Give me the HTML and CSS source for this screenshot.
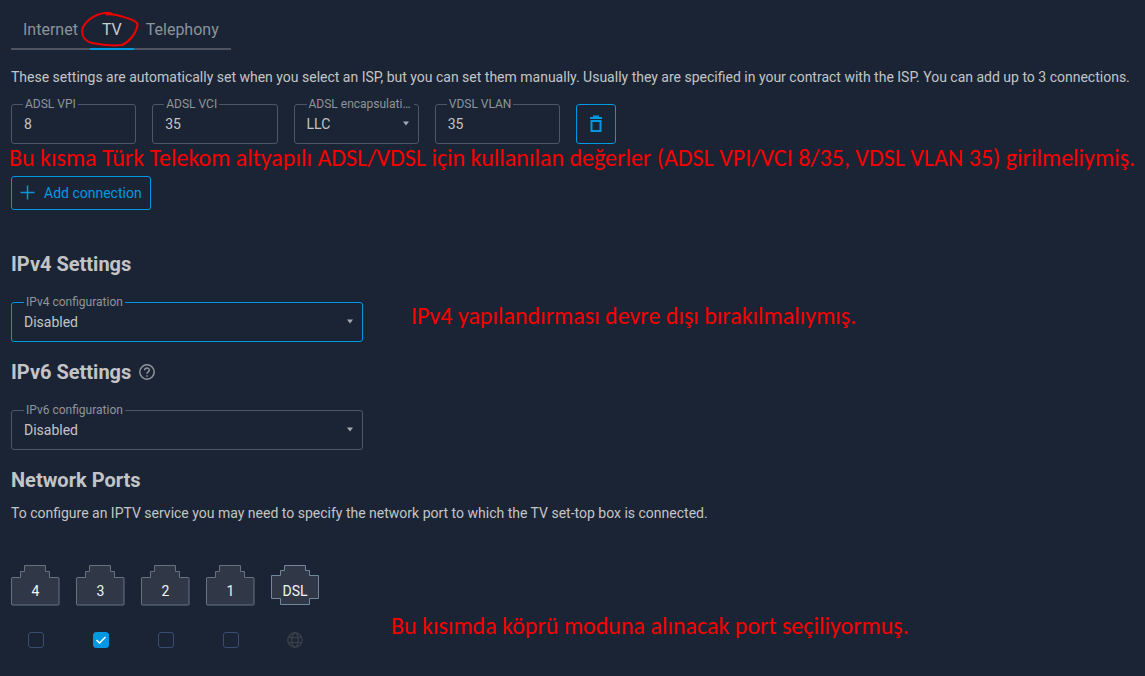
FILE: index.html
```html
<!DOCTYPE html>
<html lang="en">
<head>
<meta charset="utf-8">
<title>TV connection settings</title>
<link rel="stylesheet" href="styles.css">
</head>
<body>
<main class="page">
  <nav class="tabs">
    <a class="tab" href="#internet">Internet</a>
    <a class="tab tab-active" href="#tv" aria-current="page">TV
      <svg class="tab-mark" viewBox="0 0 60 36" aria-hidden="true"><path d="M33 3.500C31 1.500 28 1.500 25 2C15 3 5 10 2.500 18C1 25 5 30 12 32C22 34 32 35 42 34C49 31 56 23 57.500 14C58 10 49 7.500 42 5.500C37 4 31 3 26 3.500"/></svg>
    </a>
    <a class="tab" href="#telephony">Telephony</a>
  </nav>

  <p class="text">These settings are automatically set when you select an ISP, but you can set them manually. Usually they are specified in your contract with the ISP. You can add up to 3 connections.</p>

  <div class="connection">
    <div class="field"><label class="label" for="vpi">ADSL VPI</label><input class="control" id="vpi" type="text" value="8"></div>
    <div class="field"><label class="label" for="vci">ADSL VCI</label><input class="control" id="vci" type="text" value="35"></div>
    <div class="field">
      <label class="label label-select" for="encap">ADSL encapsulation</label>
      <select class="control" id="encap"><option>LLC</option></select>
      <svg class="arrow" viewBox="0 0 6 5" aria-hidden="true"><path d="M0 0.500H6L3 4.500Z"/></svg>
    </div>
    <div class="field"><label class="label" for="vlan">VDSL VLAN</label><input class="control" id="vlan" type="text" value="35"></div>
    <button class="delete" type="button" aria-label="Delete connection">
      <svg width="16" height="18" viewBox="0 0 16 18" aria-hidden="true"><path d="M2 3H14M5 1.500H11M3.500 6V16H12.500V6Z"/></svg>
    </button>
  </div>

  <p class="note note-values">Bu kısma Türk Telekom altyapılı ADSL/VDSL için kullanılan değerler (ADSL VPI/VCI 8/35, VDSL VLAN 35) girilmeliymiş.</p>

  <button class="add" type="button">
    <svg width="16" height="16" viewBox="0 0 16 16" aria-hidden="true"><path d="M7.500 0.500V14.500M0.500 7.500H14.500"/></svg>
    Add connection
  </button>

  <section class="section section-first">
    <h2 class="title">IPv4 Settings</h2>
    <div class="row">
      <div class="field field-wide field-focus">
        <label class="label label-select" for="ipv4">IPv4 configuration</label>
        <select class="control" id="ipv4"><option>Disabled</option></select>
        <svg class="arrow" viewBox="0 0 6 5" aria-hidden="true"><path d="M0 0.500H6L3 4.500Z"/></svg>
      </div>
      <p class="note">IPv4 yapılandırması devre dışı bırakılmalıymış.</p>
    </div>
  </section>

  <section class="section">
    <h2 class="title">IPv6 Settings
      <svg width="16" height="16" viewBox="0 0 16 16" aria-hidden="true"><circle cx="8" cy="8" r="7.200"/><path d="M5.700 6.300C5.700 3.300 10.300 3.300 10.300 6.100C10.300 7.800 8 8 8 9.800M8 11.200V12.700"/></svg>
    </h2>
    <div class="row">
      <div class="field field-wide">
        <label class="label label-select" for="ipv6">IPv6 configuration</label>
        <select class="control" id="ipv6"><option>Disabled</option></select>
        <svg class="arrow" viewBox="0 0 6 5" aria-hidden="true"><path d="M0 0.500H6L3 4.500Z"/></svg>
      </div>
    </div>
  </section>

  <section class="section">
    <h2 class="title">Network Ports</h2>
    <p class="text text-ports">To configure an IPTV service you may need to specify the network port to which the TV set-top box is connected.</p>
    <div class="ports-row">
      <div class="ports">
        <div class="port">
          <label class="jack" for="port4"><svg class="jack-shape" viewBox="0 0 49 41" aria-hidden="true"><path d="M13.500 0.500H34.500V6.500H38.500V12.500H47.500L48 13V39.500L47.500 40H1L0.500 39.500V13L1 12.500H9.500V6.500H13.500Z"/></svg><span class="jack-name">4</span></label>
          <span class="check-wrap"><input class="check" id="port4" type="checkbox"></span>
        </div>
        <div class="port">
          <label class="jack" for="port3"><svg class="jack-shape" viewBox="0 0 49 41" aria-hidden="true"><path d="M13.500 0.500H34.500V6.500H38.500V12.500H47.500L48 13V39.500L47.500 40H1L0.500 39.500V13L1 12.500H9.500V6.500H13.500Z"/></svg><span class="jack-name">3</span></label>
          <span class="check-wrap"><input class="check" id="port3" type="checkbox" checked><svg class="tick" viewBox="0 0 16 16" aria-hidden="true"><path d="M3.500 8L6.500 11L12.500 5"/></svg></span>
        </div>
        <div class="port">
          <label class="jack" for="port2"><svg class="jack-shape" viewBox="0 0 49 41" aria-hidden="true"><path d="M13.500 0.500H34.500V6.500H38.500V12.500H47.500L48 13V39.500L47.500 40H1L0.500 39.500V13L1 12.500H9.500V6.500H13.500Z"/></svg><span class="jack-name">2</span></label>
          <span class="check-wrap"><input class="check" id="port2" type="checkbox"></span>
        </div>
        <div class="port">
          <label class="jack" for="port1"><svg class="jack-shape" viewBox="0 0 49 41" aria-hidden="true"><path d="M13.500 0.500H34.500V6.500H38.500V12.500H47.500L48 13V39.500L47.500 40H1L0.500 39.500V13L1 12.500H9.500V6.500H13.500Z"/></svg><span class="jack-name">1</span></label>
          <span class="check-wrap"><input class="check" id="port1" type="checkbox"></span>
        </div>
        <div class="port port-dsl">
          <div class="jack"><svg class="jack-shape" viewBox="0 0 48 41" aria-hidden="true"><path d="M13.500 0.500H34.500V5.500H38.500V10.500H47.500V33.500H38.500V39.500H9.500V33.500H0.500V10.500H9.500V5.500H13.500Z"/></svg><span class="jack-name">DSL</span></div>
          <svg width="16" height="16" viewBox="0 0 16 16" class="globe" aria-hidden="true"><circle cx="8" cy="8" r="7.200"/><ellipse cx="8" cy="8" rx="3.200" ry="7.200"/><path d="M1.500 5.500H14.500M1.500 10.500H14.500"/></svg>
        </div>
      </div>
      <p class="note note-ports">Bu kısımda köprü moduna alınacak port seçiliyormuş.</p>
    </div>
  </section>
</main>
</body>
</html>
```
FILE: styles.css
```css
* { box-sizing: border-box; }

body {
  margin: 0;
  background: #1b2434;
  color: #c3c4c6;
  font: 14px/20px Roboto, sans-serif;
}

p, h2 { margin: 0; }
svg { fill: none; stroke: currentColor; }

.page {
  min-height: 100vh;
  padding: 10px 10px 0 11px;
  overflow: hidden;
}

.tabs {
  display: flex;
  width: fit-content;
  box-shadow: inset 0 -2px #4f5460;
}
.tab {
  position: relative;
  padding: 10px 12px;
  color: #8d9399;
  font-size: 16px;
  text-decoration: none;
}
.tab-active {
  color: #c9cbcd;
  box-shadow: inset 0 -2px #0099e0;
}
.tab-mark {
  position: absolute;
  top: 1px;
  left: -10px;
  width: 60px;
  height: 36px;
  color: #ee0000;
  stroke-width: 2;
}

.text {
  margin-top: 17px;
  white-space: nowrap;
}

.connection {
  display: grid;
  grid-template-columns: repeat(4, 1fr) 40px;
  gap: 16px;
  max-width: 605px;
  margin-top: 17px;
}

.field {
  position: relative;
  min-width: 0;
}
.field-wide { width: 352px; }
.label {
  position: absolute;
  top: -8px;
  left: 12px;
  max-width: calc(100% - 18px);
  padding: 0 2px;
  overflow: hidden;
  background: #1b2434;
  color: #8f959a;
  font-size: 12px;
  line-height: 16px;
  text-overflow: ellipsis;
  white-space: nowrap;
}
.label-select { left: 13px; }
.control {
  display: block;
  width: 100%;
  height: 40px;
  padding: 0 12px;
  border: 1px solid #4f5663;
  border-radius: 3px;
  outline: 0;
  appearance: none;
  background: transparent;
  color: inherit;
  font: inherit;
}
.field-focus .control { border-color: #0099e0; }
.arrow {
  position: absolute;
  top: 17px;
  right: 10px;
  width: 6px;
  height: 5px;
  fill: #a5a9ad;
  stroke: none;
  pointer-events: none;
}

.delete, .add {
  display: flex;
  align-items: center;
  justify-content: center;
  border: 1px solid #0099e0;
  border-radius: 3px;
  background: transparent;
  color: #0099e0;
  font: inherit;
}
.delete {
  height: 40px;
  padding: 0;
  stroke-width: 2;
}
.add {
  gap: 8px;
  height: 34px;
  padding: 0 8px;
  stroke-width: 1.5;
}

.note {
  color: #f80000;
  font: 24px/28px Carlito, Calibri, "Noto Sans", sans-serif;
  white-space: nowrap;
}
.note-values {
  margin: 0 0 4px -2px;
}

.section { margin-top: 18px; }
.section-first { margin-top: 42px; }
.title {
  display: flex;
  align-items: center;
  gap: 8px;
  font-size: 20px;
  font-weight: 700;
  line-height: 24px;
}
.title svg {
  color: #8f959a;
  stroke-width: 1.5;
}
.row {
  display: flex;
  align-items: flex-start;
  gap: 48px;
  margin-top: 26px;
}

.text-ports { margin-top: 11px; }
.ports-row {
  display: flex;
  align-items: flex-end;
  gap: 72px;
  margin-top: 42px;
}
.ports {
  display: flex;
  gap: 16px;
}
.port {
  display: flex;
  flex-direction: column;
  align-items: center;
  gap: 26px;
  width: 49px;
}
.port-dsl { width: 48px; }
.jack {
  display: grid;
  width: 100%;
  height: 41px;
  color: #f2f3f4;
}
.jack-shape, .jack-name { grid-area: 1 / 1; }
.jack-shape {
  width: 100%;
  height: 41px;
  fill: #303848;
  stroke: #63747f;
}
.port-dsl .jack-shape { stroke: #73879a; }
.jack-name {
  padding-top: 16px;
  text-align: center;
}
.check {
  width: 16px;
  height: 16px;
  margin: 0;
  border: 1px solid #3a4d70;
  border-radius: 3px;
  appearance: none;
}
.check:checked {
  border-color: #0099e0;
  background: #0099e0;
}
.check-wrap { display: grid; }
.check-wrap > * { grid-area: 1 / 1; }
.tick {
  width: 16px;
  height: 16px;
  color: #fff;
  stroke-width: 1.5;
  pointer-events: none;
}
.globe {
  color: #373f4a;
  stroke-width: 1.5;
}
.note-ports { padding-bottom: 8px; }
```
